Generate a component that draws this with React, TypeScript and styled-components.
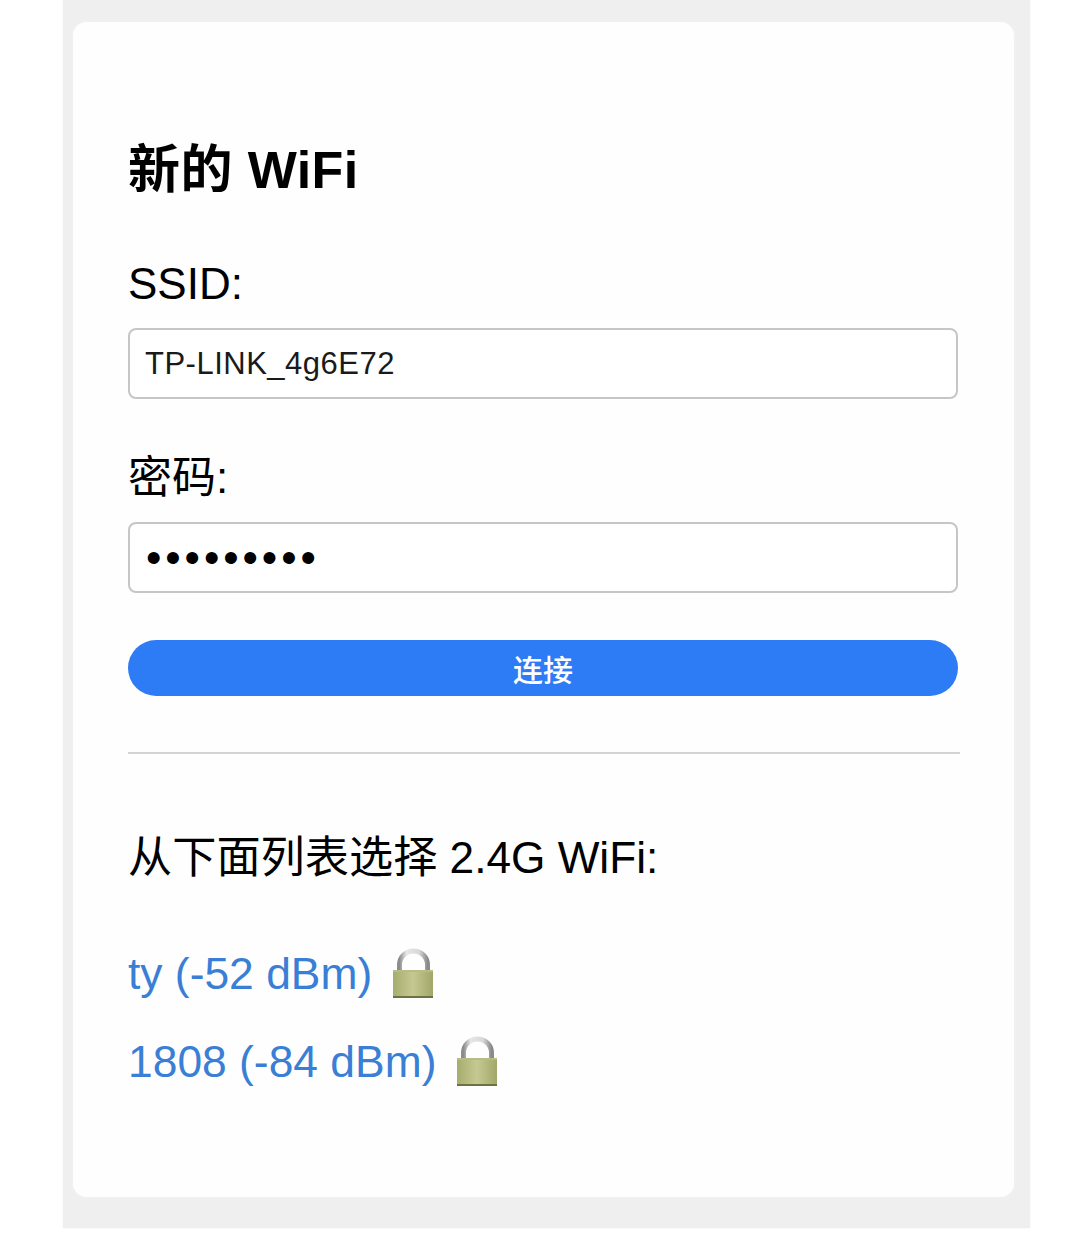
import styled, { createGlobalStyle } from "styled-components";

const GlobalStyle = createGlobalStyle`
  html, body {
    margin: 0;
    padding: 0;
    background: #ffffff;
  }
  body {
    font-family: "Liberation Sans", "Noto Sans CJK SC", sans-serif;
    color: #000;
  }
`;

const Page = styled.div`
  width: 1080px;
  height: 1241px;
  padding: 0 50px 13px 63px;
  box-sizing: border-box;
`;

const Frame = styled.div`
  height: 100%;
  padding: 22px 16px 31px 10px;
  box-sizing: border-box;
  background: #efeff0;
  box-shadow: 0 0 2px #f2f2f3;
`;

const Card = styled.main`
  height: 100%;
  padding: 116px 55px 0 55px;
  box-sizing: border-box;
  background: #fefefe;
  border-radius: 14px;
  box-shadow: 0 0 3px #f6f6f6;
`;

const Title = styled.h1`
  margin: 0;
  font-size: 52px;
  line-height: 64px;
  font-weight: 700;
  letter-spacing: 0.4px;
`;

const Form = styled.form`
  margin-top: 56px;
  display: flex;
  flex-direction: column;
`;

const Label = styled.label`
  display: block;
  font-size: 44px;
  line-height: 52px;
  margin-bottom: 18px;

  input + & {
    margin-top: 53px;
  }
`;

const Field = styled.input`
  display: block;
  width: 830px;
  height: 71px;
  padding: 0 15px;
  box-sizing: border-box;
  border: 2.5px solid #c6c6c6;
  border-radius: 8px;
  background: #fff;
  color: #1a1a1a;
  font-family: "Liberation Sans", sans-serif;
  font-size: 31px;
  letter-spacing: 0.5px;
  outline: none;

  &[type="password"] {
    padding-left: 16px;
    color: #000;
    font-size: 44px;
    letter-spacing: 3.9px;
  }
`;

const ConnectButton = styled.button`
  width: 830px;
  height: 56px;
  margin-top: 47px;
  border: 0;
  border-radius: 28px;
  background: #2e7bf6;
  color: #fff;
  font-family: "Noto Sans CJK SC", sans-serif;
  font-size: 30px;
  font-weight: 500;
  padding: 0;
`;

const Divider = styled.hr`
  width: 832px;
  margin: 56px 0 0 0;
  border: 0;
  border-top: 2px solid #d4d4d4;
`;

const ListTitle = styled.h2`
  margin: 76px 0 0 0;
  font-size: 44.2px;
  line-height: 56px;
  font-weight: 400;
`;

const NetworkList = styled.ul`
  list-style: none;
  margin: 62px 0 0 0;
  padding: 0;
  display: flex;
  flex-direction: column;
  gap: 36px;
`;

const NetworkItem = styled.li`
  display: flex;
  align-items: center;
  gap: 18px;
  height: 52px;
`;

const NetworkLink = styled.a`
  color: #3a7fd5;
  font-size: 44.4px;
  line-height: 52px;
  text-decoration: none;
`;

const Lock = () => (
  <svg width="46" height="52" viewBox="0 0 46 52">
    <defs>
      <linearGradient id="shackle" x1="0" y1="0" x2="1" y2="0">
        <stop offset="0" stopColor="#8c8c8c" />
        <stop offset="0.25" stopColor="#e6e6e6" />
        <stop offset="0.7" stopColor="#d8d8d8" />
        <stop offset="1" stopColor="#8a8a8a" />
      </linearGradient>
      <linearGradient id="body" x1="0" y1="0" x2="1" y2="0">
        <stop offset="0" stopColor="#a6ad6e" />
        <stop offset="0.5" stopColor="#c6c892" />
        <stop offset="1" stopColor="#a1a768" />
      </linearGradient>
    </defs>
    <path d="M9.5 23V17a14 14 0 0 1 28 0v6" fill="none" stroke="url(#shackle)" strokeWidth="5" />
    <rect x="3" y="22" width="40" height="28" fill="url(#body)" />
    <rect x="3" y="22" width="40" height="2" fill="#b9bb84" />
    <rect x="3" y="48" width="40" height="2" fill="#6e7240" />
  </svg>
);

const networks = ["ty (-52 dBm)", "1808 (-84 dBm)"];

export default function App() {
  return (
    <>
      <GlobalStyle />
      <Page>
        <Frame>
          <Card>
            <Title>新的 WiFi</Title>
            <Form>
              <Label>SSID:</Label>
              <Field type="text" defaultValue="TP-LINK_4g6E72" />
              <Label>密码:</Label>
              <Field type="password" defaultValue="123456789" />
              <ConnectButton type="button">连接</ConnectButton>
            </Form>
            <Divider />
            <ListTitle>从下面列表选择 2.4G WiFi:</ListTitle>
            <NetworkList>
              {networks.map((name) => (
                <NetworkItem key={name}>
                  <NetworkLink href="#">{name}</NetworkLink>
                  <Lock />
                </NetworkItem>
              ))}
            </NetworkList>
          </Card>
        </Frame>
      </Page>
    </>
  );
}
